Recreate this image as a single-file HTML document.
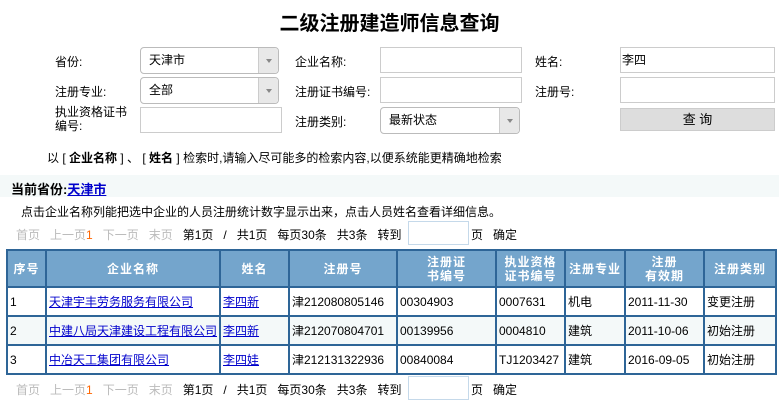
<!DOCTYPE html>
<html><head><meta charset="utf-8"><style>
*{margin:0;padding:0;box-sizing:border-box}
body{width:779px;height:405px;background:#fff;font-family:"Liberation Sans","Noto Sans CJK SC",sans-serif;font-size:12px;color:#000;position:relative;overflow:hidden}
.a{position:absolute;white-space:nowrap}
.in{position:absolute;border:1px solid #ccc;background:#fff;height:26px;padding-left:1px;line-height:24px}
.sel{position:absolute;border:1px solid #bbb;border-radius:4px;background:#fff;height:27px;padding-left:8px;line-height:25px}
.sel:after{content:"";position:absolute;right:0;top:0;width:19px;height:25px;border-left:1px solid #ccc;background:#e8e8e8;border-radius:0 4px 4px 0}
.sel:before{content:"";position:absolute;right:6px;top:11px;border-left:3px solid transparent;border-right:3px solid transparent;border-top:4px solid #888;z-index:2}
.g{color:#bbb}
table{position:absolute;left:6px;top:249px;border-collapse:collapse;width:771px}
td,th{border:2px solid #2e6597;height:29px;padding:0 2px;font-size:12px;text-align:left}
th{background:#74a5cc;color:#fff;text-align:center;height:37px;line-height:14px;font-weight:bold;letter-spacing:1px}
tr.z td{background:#f4f9f9}
a{color:#00c;text-decoration:underline}
</style></head><body>
<div class="a" style="left:0;width:779px;top:7px;text-align:center;font-size:20px;font-weight:bold">二级注册建造师信息查询</div>

<div class="a" style="left:55px;top:53px">省份:</div>
<div class="sel" style="left:140px;top:47px;width:139px">天津市</div>
<div class="a" style="left:295px;top:53px">企业名称:</div>
<div class="in" style="left:380px;top:47px;width:142px"></div>
<div class="a" style="left:535px;top:53px">姓名:</div>
<div class="in" style="left:620px;top:47px;width:155px">李四</div>

<div class="a" style="left:55px;top:83px">注册专业:</div>
<div class="sel" style="left:140px;top:77px;width:139px">全部</div>
<div class="a" style="left:295px;top:83px">注册证书编号:</div>
<div class="in" style="left:380px;top:77px;width:142px"></div>
<div class="a" style="left:535px;top:83px">注册号:</div>
<div class="in" style="left:620px;top:77px;width:155px"></div>

<div class="a" style="left:55px;top:105px;line-height:14px">执业资格证书<br>编号:</div>
<div class="in" style="left:140px;top:107px;width:142px"></div>
<div class="a" style="left:295px;top:113px">注册类别:</div>
<div class="sel" style="left:380px;top:107px;width:140px">最新状态</div>
<div class="a" style="left:620px;top:108px;width:155px;height:23px;background:#ddd;border:1px solid #ccc;text-align:center;line-height:21px;font-size:13px">查 询</div>

<div class="a" style="left:47px;top:149px">以 [ <b>企业名称</b> ] 、 [ <b>姓名</b> ] 检索时,请输入尽可能多的检索内容,以便系统能更精确地检索</div>

<div class="a" style="left:0;top:175px;width:779px;height:22px;background:#f4f9f9"></div>
<div class="a" style="left:11px;top:179px;font-size:13px;font-weight:bold">当前省份:<a href="#">天津市</a></div>
<div class="a" style="left:21px;top:203px">点击企业名称列能把选中企业的人员注册统计数字显示出来，点击人员姓名查看详细信息。</div>

<div class="a" style="left:16px;top:226px"><span class="g">首页 &nbsp; 上一页</span><span style="color:#f60">1</span> &nbsp; <span class="g">下一页 &nbsp; 末页</span> &nbsp; 第1页 &nbsp; / &nbsp; 共1页 &nbsp; 每页30条 &nbsp; 共3条 &nbsp; 转到</div>
<div class="a" style="left:408px;top:221px;width:61px;height:24px;border:1px solid #c5d9ea"></div>
<div class="a" style="left:471px;top:226px">页 &nbsp; 确定</div>

<table>
<tr><th style="width:39px">序号</th><th style="width:174px">企业名称</th><th style="width:69px">姓名</th><th style="width:108px">注册号</th><th style="width:99px">注册证<br>书编号</th><th style="width:69px">执业资格<br>证书编号</th><th style="width:60px">注册专业</th><th style="width:79px">注册<br>有效期</th><th>注册类别</th></tr>
<tr><td>1</td><td><a href="#">天津宇丰劳务服务有限公司</a></td><td><a href="#">李四新</a></td><td>津212080805146</td><td>00304903</td><td>0007631</td><td>机电</td><td>2011-11-30</td><td>变更注册</td></tr>
<tr class="z"><td>2</td><td><a href="#">中建八局天津建设工程有限公司</a></td><td><a href="#">李四新</a></td><td>津212070804701</td><td>00139956</td><td>0004810</td><td>建筑</td><td>2011-10-06</td><td>初始注册</td></tr>
<tr><td>3</td><td><a href="#">中冶天工集团有限公司</a></td><td><a href="#">李四娃</a></td><td>津212131322936</td><td>00840084</td><td>TJ1203427</td><td>建筑</td><td>2016-09-05</td><td>初始注册</td></tr>
</table>

<div class="a" style="left:16px;top:381px"><span class="g">首页 &nbsp; 上一页</span><span style="color:#f60">1</span> &nbsp; <span class="g">下一页 &nbsp; 末页</span> &nbsp; 第1页 &nbsp; / &nbsp; 共1页 &nbsp; 每页30条 &nbsp; 共3条 &nbsp; 转到</div>
<div class="a" style="left:408px;top:376px;width:61px;height:24px;border:1px solid #c5d9ea"></div>
<div class="a" style="left:471px;top:381px">页 &nbsp; 确定</div>
</body></html>
